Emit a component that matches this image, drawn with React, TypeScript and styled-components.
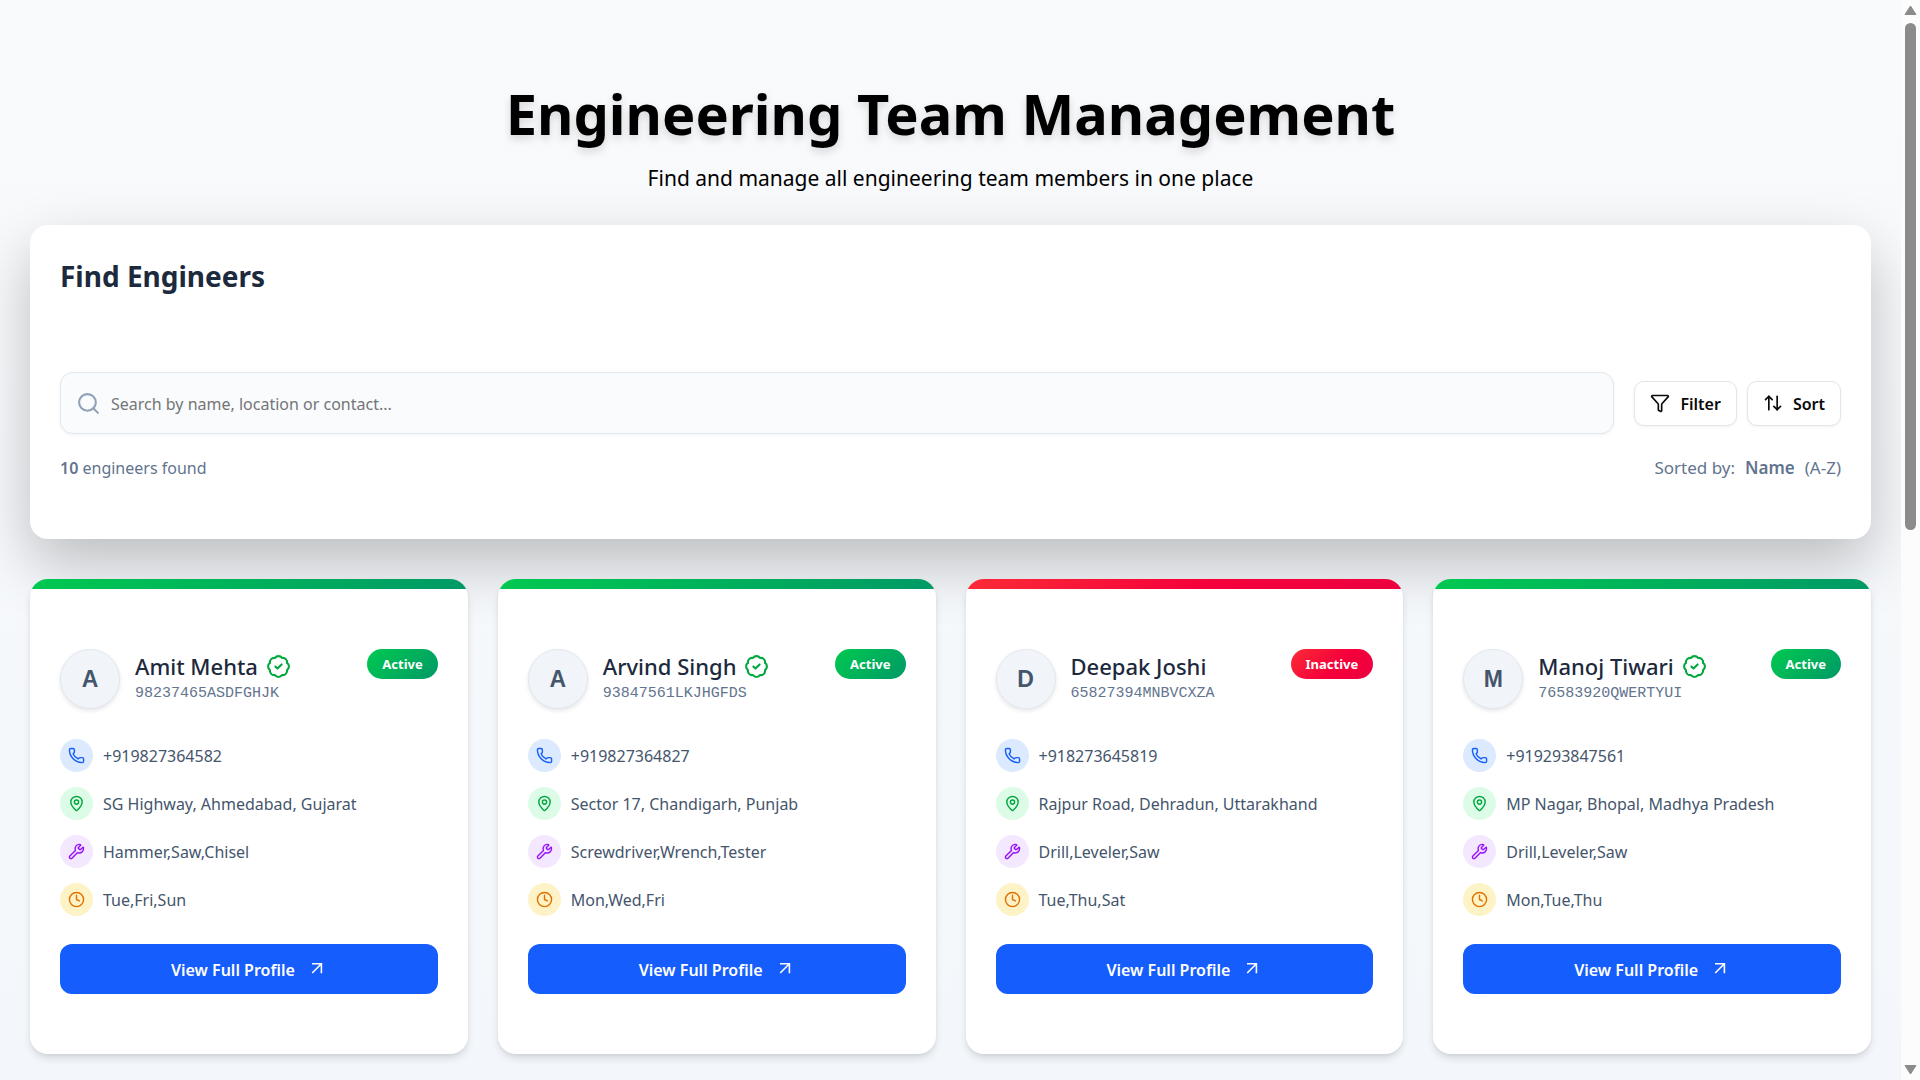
import React from 'react';
import styled, { createGlobalStyle } from 'styled-components';
import { ArrowUpDown, BadgeCheck, Clock, Funnel, MapPin, Phone, Search, Wrench } from 'lucide-react';

const GlobalStyle = createGlobalStyle`
  *, *::before, *::after { box-sizing: border-box; }
  body {
    margin: 0;
    font-family: "Noto Sans", "Open Sans", sans-serif;
    font-size: 16px;
    line-height: 28px;
    color: #000;
  }
  h1, h2, h3, p, ul { margin: 0; padding: 0; }
  ul { list-style: none; }
  button, input { font: inherit; color: inherit; }
  svg { display: block; flex-shrink: 0; }
`;

const Shell = styled.div`
  display: grid;
  grid-template-columns: minmax(0, 1fr) 19px;
  height: 100vh;
  overflow: hidden;
`;

const Page = styled.main`
  padding: 75px 30px 30px;
  overflow: hidden;
  background: linear-gradient(to bottom, #f9fafc, #f3f7fb);
`;

const Header = styled.header`
  margin-bottom: 29px;
  text-align: center;
`;

const Title = styled.h1`
  margin-bottom: 9px;
  font-size: 56px;
  font-weight: 700;
  line-height: 76px;
  text-shadow: 0 4px 8px rgba(0, 0, 0, 0.15);
`;

const Subtitle = styled.p`
  font-size: 21px;
  line-height: 36px;
`;

const Panel = styled.section`
  margin-bottom: 40px;
  padding: 30px 30px 57px;
  border-radius: 18px;
  background: #fff;
  box-shadow: 0 25px 60px rgba(0, 0, 0, 0.24);
`;

const PanelTitle = styled.h2`
  margin-bottom: 75px;
  font-size: 28px;
  font-weight: 700;
  line-height: 42px;
  color: #1d293d;
`;

const Toolbar = styled.div`
  display: flex;
  align-items: center;
  gap: 20px;
  margin-bottom: 20px;
`;

const SearchBox = styled.label`
  display: flex;
  flex: 1;
  align-items: center;
  gap: 10px;
  height: 62px;
  padding: 0 15px;
  border: 1px solid #e2e8f0;
  border-radius: 13px;
  background: #f9fbfd;
  color: #90a1b9;
  box-shadow: 0 1px 3px rgba(0, 0, 0, 0.06);
`;

const SearchInput = styled.input`
  flex: 1;
  min-width: 0;
  padding: 2px 0 0;
  border: 0;
  outline: 0;
  background: transparent;
  color: #1d293d;

  &::placeholder { color: #757575; opacity: 1; }
`;

const Actions = styled.div`
  display: flex;
  gap: 10px;
`;

const ActionButton = styled.button`
  display: flex;
  align-items: center;
  gap: 10px;
  height: 45px;
  padding: 0 15px;
  border: 1px solid #e5e5e5;
  border-radius: 10px;
  background: #fff;
  font-weight: 600;
  color: #0a0a0a;
  box-shadow: 0 1px 3px rgba(0, 0, 0, 0.06);
`;

const ButtonText = styled.span`
  padding-top: 2px;
`;

const Summary = styled.div`
  display: flex;
  justify-content: space-between;
  color: #62748e;
`;

const Strong = styled.strong`
  font-weight: 600;
`;

const SortInfo = styled.p`
  display: flex;
  gap: 10px;
  font-size: 17px;
`;

const Cards = styled.ul`
  display: grid;
  grid-template-columns: repeat(4, minmax(0, 1fr));
  gap: 30px;
`;

const statusFill = (active: boolean) =>
  active
    ? 'linear-gradient(135deg, #00c950, #009966)'
    : 'linear-gradient(135deg, #fb2c36, #f5003b 55%, #ec003f)';

const Card = styled.li<{ $active: boolean }>`
  padding-bottom: 60px;
  border-radius: 18px;
  overflow: hidden;
  background: #fff;
  box-shadow: 0 5px 8px -1px rgba(0, 0, 0, 0.12), 0 2px 5px -2px rgba(0, 0, 0, 0.1);

  &::before {
    content: "";
    display: block;
    height: 10px;
    background: ${(p) => statusFill(p.$active)};
  }
`;

const CardBody = styled.article`
  padding: 60px 30px 0;
`;

const Identity = styled.div`
  display: flex;
  align-items: center;
  gap: 15px;
  height: 60px;
  margin-bottom: 30px;
`;

const Avatar = styled.div`
  display: grid;
  place-items: center;
  flex-shrink: 0;
  width: 60px;
  height: 60px;
  border: 1px solid #e2e8f0;
  border-radius: 50%;
  background: #f1f5f9;
  font-family: "Liberation Sans", Arial, sans-serif;
  font-size: 23px;
  font-weight: 700;
  line-height: 30px;
  color: #45556c;
  box-shadow: 0 2px 4px rgba(0, 0, 0, 0.1);
`;

const NameBlock = styled.div`
  flex: 1;
  min-width: 0;
`;

const Name = styled.h3`
  display: flex;
  align-items: center;
  gap: 8px;
  font-size: 22px;
  font-weight: 500;
  line-height: 30px;
  color: #1d293d;

  svg { color: #00a63e; }
`;

const Code = styled.p`
  font-family: "Liberation Mono", monospace;
  font-size: 15px;
  line-height: 26px;
  color: #62748e;
`;

const Badge = styled.span<{ $active: boolean }>`
  align-self: flex-start;
  padding: 0 15px;
  border-radius: 15px;
  background: ${(p) => statusFill(p.$active)};
  font-size: 13px;
  font-weight: 700;
  line-height: 30px;
  color: #fff;
`;

const Details = styled.ul`
  display: grid;
  gap: 15px;
  margin-bottom: 28px;
`;

const Detail = styled.li`
  display: flex;
  align-items: center;
  gap: 10px;
  color: #45556c;
`;

const Bubble = styled.span<{ $bg: string; $fg: string }>`
  display: grid;
  place-items: center;
  width: 33px;
  height: 33px;
  border-radius: 50%;
  background: ${(p) => p.$bg};
  color: ${(p) => p.$fg};
`;

const ProfileButton = styled.button`
  display: flex;
  align-items: center;
  justify-content: center;
  gap: 12px;
  width: 100%;
  height: 50px;
  border: 0;
  border-radius: 12px;
  background: #155dfc;
  font-weight: 600;
  color: #fff;
`;

const Scrollbar = styled.div`
  display: flex;
  flex-direction: column;
  align-items: center;
  gap: 8px;
  padding: 5px 0;
  background: #fcfcfc;
  color: #8b8b8b;
`;

const Track = styled.div`
  flex: 1;
`;

const Thumb = styled.div`
  width: 11px;
  height: 49%;
  border-radius: 6px;
  background: #8b8b8b;
`;

interface Engineer {
  name: string;
  code: string;
  verified: boolean;
  active: boolean;
  phone: string;
  place: string;
  tools: string;
  days: string;
}

const engineers: Engineer[] = [
  { name: 'Amit Mehta', code: '98237465ASDFGHJK', verified: true, active: true, phone: '+919827364582', place: 'SG Highway, Ahmedabad, Gujarat', tools: 'Hammer,Saw,Chisel', days: 'Tue,Fri,Sun' },
  { name: 'Arvind Singh', code: '93847561LKJHGFDS', verified: true, active: true, phone: '+919827364827', place: 'Sector 17, Chandigarh, Punjab', tools: 'Screwdriver,Wrench,Tester', days: 'Mon,Wed,Fri' },
  { name: 'Deepak Joshi', code: '65827394MNBVCXZA', verified: false, active: false, phone: '+918273645819', place: 'Rajpur Road, Dehradun, Uttarakhand', tools: 'Drill,Leveler,Saw', days: 'Tue,Thu,Sat' },
  { name: 'Manoj Tiwari', code: '76583920QWERTYUI', verified: true, active: true, phone: '+919293847561', place: 'MP Nagar, Bhopal, Madhya Pradesh', tools: 'Drill,Leveler,Saw', days: 'Mon,Tue,Thu' },
];

function OpenArrow() {
  return (
    <svg width="20" height="20" viewBox="0 0 20 20" fill="none" stroke="currentColor" strokeWidth="1.6" aria-hidden="true">
      <path d="M5 4.8h9.4v9.4M14.4 4.8 5.2 14" />
    </svg>
  );
}

function EngineerCard({ person }: { person: Engineer }) {
  return (
    <Card $active={person.active}>
      <CardBody>
        <Identity>
          <Avatar>{person.name[0]}</Avatar>
          <NameBlock>
            <Name>
              {person.name}
              {person.verified && <BadgeCheck size={25} />}
            </Name>
            <Code>{person.code}</Code>
          </NameBlock>
          <Badge $active={person.active}>{person.active ? 'Active' : 'Inactive'}</Badge>
        </Identity>
        <Details>
          <Detail>
            <Bubble $bg="#dbeafe" $fg="#155dfc"><Phone size={17} /></Bubble>
            {person.phone}
          </Detail>
          <Detail>
            <Bubble $bg="#dcfce7" $fg="#00a63e"><MapPin size={17} /></Bubble>
            {person.place}
          </Detail>
          <Detail>
            <Bubble $bg="#f3e8ff" $fg="#9810fa"><Wrench size={17} /></Bubble>
            {person.tools}
          </Detail>
          <Detail>
            <Bubble $bg="#fef3c6" $fg="#e17100"><Clock size={17} /></Bubble>
            {person.days}
          </Detail>
        </Details>
        <ProfileButton type="button">
          <ButtonText>View Full Profile</ButtonText>
          <OpenArrow />
        </ProfileButton>
      </CardBody>
    </Card>
  );
}

export default function App() {
  return (
    <>
      <GlobalStyle />
      <Shell>
        <Page>
          <Header>
            <Title>Engineering Team Management</Title>
            <Subtitle>Find and manage all engineering team members in one place</Subtitle>
          </Header>
          <Panel>
            <PanelTitle>Find Engineers</PanelTitle>
            <Toolbar>
              <SearchBox>
                <Search size={25} />
                <SearchInput type="text" aria-label="Search engineers" placeholder="Search by name, location or contact..." />
              </SearchBox>
              <Actions>
                <ActionButton type="button"><Funnel size={20} /><ButtonText>Filter</ButtonText></ActionButton>
                <ActionButton type="button"><ArrowUpDown size={20} /><ButtonText>Sort</ButtonText></ActionButton>
              </Actions>
            </Toolbar>
            <Summary>
              <p><Strong>10</Strong> engineers found</p>
              <SortInfo>
                <span>Sorted by:</span>
                <Strong>Name</Strong>
                <span>(A-Z)</span>
              </SortInfo>
            </Summary>
          </Panel>
          <Cards>
            {engineers.map((person) => <EngineerCard key={person.code} person={person} />)}
          </Cards>
        </Page>
        <Scrollbar aria-hidden="true">
          <svg width="13" height="10" viewBox="0 0 13 10"><path d="M6.5 1 12 9.500H1Z" fill="currentColor" stroke="currentColor" strokeLinejoin="round" /></svg>
          <Track><Thumb /></Track>
          <svg width="13" height="10" viewBox="0 0 13 10"><path d="M6.5 9 12 .5H1Z" fill="currentColor" stroke="currentColor" strokeLinejoin="round" /></svg>
        </Scrollbar>
      </Shell>
    </>
  );
}
